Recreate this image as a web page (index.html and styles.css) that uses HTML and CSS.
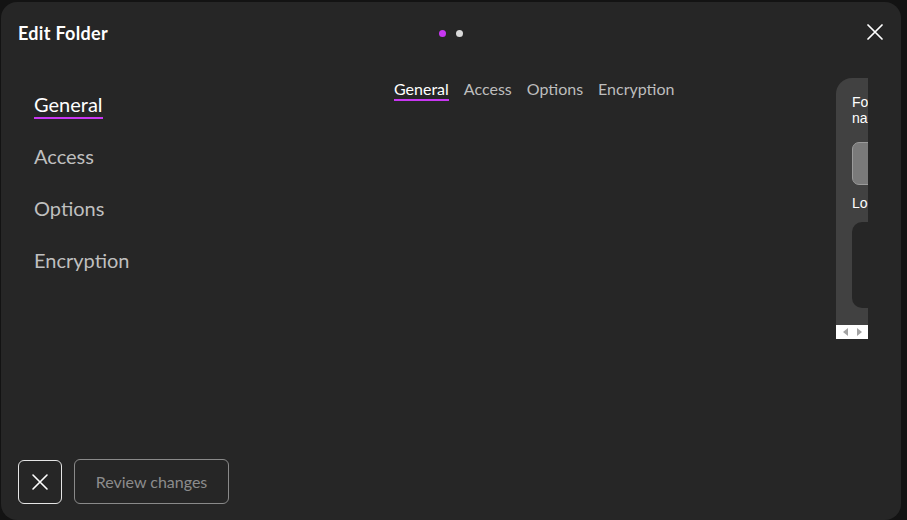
FILE: index.html
```html
<!DOCTYPE html>
<html lang="en">
<head>
	<meta charset="UTF-8">
	<title>Edit Folder</title>
	<link rel="stylesheet" href="styles.css">
</head>
<body>
	<div class="modal">
		<div class="head">
			<div class="title">Edit Folder</div>
			<div class="dots">
				<span class="dot on"></span>
				<span class="dot"></span>
			</div>
			<div class="close">
				<svg width="16" height="16" viewBox="0 0 16 16"><path d="M1 1L15 15M15 1L1 15" stroke="#fff" stroke-width="1.7" stroke-linecap="round"/></svg>
			</div>
		</div>
		<div class="main">
			<ul class="nav">
				<li><span class="active">General</span></li>
				<li><span>Access</span></li>
				<li><span>Options</span></li>
				<li><span>Encryption</span></li>
			</ul>
			<div class="tabs">
				<span class="tab active">General</span>
				<span class="tab">Access</span>
				<span class="tab">Options</span>
				<span class="tab">Encryption</span>
			</div>
			<div class="side">
				<div class="panel">
					<div class="label">Folder<br>name</div>
					<div class="input"></div>
					<div class="label">Location</div>
					<div class="area"></div>
				</div>
				<div class="scroll">
					<span class="arr left"></span>
					<span class="arr right"></span>
				</div>
			</div>
		</div>
		<div class="foot">
			<div class="btn-x">
				<svg width="18" height="18" viewBox="0 0 18 18"><path d="M2 2L16 16M16 2L2 16" stroke="#fff" stroke-width="1.6" stroke-linecap="round"/></svg>
			</div>
			<div class="btn-review">Review changes</div>
		</div>
	</div>
</body>
</html>
```

FILE: styles.css
```css
*{
	padding: 0;
	margin: 0;
	box-sizing: border-box;
}
html,body{
	width: 100%;
	height: 100%;
}
body{
	background-color: #131313;
	font-family: "Lato", "Noto Sans", sans-serif;
	overflow: hidden;
}
.modal{
	margin: 2px 6px 0 1px;
	height: 518px;
	background-color: #262626;
	border-radius: 16px;
	display: flex;
	flex-direction: column;
}
.head{
	height: 62px;
	display: flex;
	align-items: center;
	padding: 0 18px 0 17px;
	position: relative;
}
.title{
	color: #fff;
	font-size: 18px;
	font-weight: 700;
	letter-spacing: 0.3px;
	flex: 1;
}
.dots{
	position: absolute;
	left: 438px;
	top: 28px;
	display: flex;
	gap: 10px;
}
.dot{
	width: 7px;
	height: 7px;
	border-radius: 50%;
	background-color: #d9d9d9;
}
.dot.on{
	background-color: #c837f2;
}
.close{
	display: flex;
	margin-top: -2px;
}
.main{
	flex: 1;
	display: flex;
	padding: 14px 33px 0 33px;
}
.nav{
	list-style: none;
	width: 360px;
	padding-top: 14px;
}
.nav li{
	height: 52px;
	font-size: 20px;
	line-height: 24px;
	color: #bfbfbf;
}
.nav span{
	display: inline-block;
	padding-bottom: 1px;
}
.nav span.active{
	color: #fff;
	border-bottom: 2px solid #c837f2;
}
.tabs{
	flex: 1;
	display: flex;
	gap: 15px;
	align-items: flex-start;
	padding-top: 1px;
}
.tab{
	font-size: 16px;
	line-height: 19px;
	color: #bdbdbd;
	padding-bottom: 1px;
}
.tab.active{
	color: #fff;
	border-bottom: 2px solid #c837f2;
}
.side{
	width: 32px;
	display: flex;
	flex-direction: column;
	height: 261px;
}
.panel{
	flex: 1;
	background-color: #414141;
	border-radius: 16px 0 0 0;
	padding: 16px 0 0 16px;
	overflow: hidden;
	font-family: "Liberation Sans", Arial, sans-serif;
}
.label{
	color: #fff;
	font-size: 14px;
	line-height: 16px;
	white-space: nowrap;
}
.input{
	width: 60px;
	height: 43px;
	margin: 16px 0 10px;
	background-color: #7a7a7a;
	border: 1px solid #9a9a9a;
	border-radius: 7px;
}
.area{
	width: 60px;
	height: 86px;
	margin-top: 11px;
	background-color: #262626;
	border-radius: 10px;
}
.scroll{
	height: 14px;
	background-color: #fff;
	display: flex;
	align-items: center;
	justify-content: space-around;
	padding: 0 2px;
}
.arr{
	width: 0;
	height: 0;
	border-top: 4px solid transparent;
	border-bottom: 4px solid transparent;
}
.arr.left{
	border-right: 5px solid #a3a3a3;
}
.arr.right{
	border-left: 5px solid #a3a3a3;
}
.foot{
	display: flex;
	gap: 12px;
	padding: 0 0 16px 17px;
	align-items: flex-end;
}
.btn-x{
	width: 44px;
	height: 44px;
	border: 1px solid #e6e6e6;
	border-radius: 6px;
	display: flex;
	align-items: center;
	justify-content: center;
}
.btn-review{
	width: 155px;
	height: 45px;
	border: 1px solid #8a8a8a;
	border-radius: 6px;
	color: #8c8c8c;
	font-size: 16px;
	display: flex;
	align-items: center;
	justify-content: center;
}
```
